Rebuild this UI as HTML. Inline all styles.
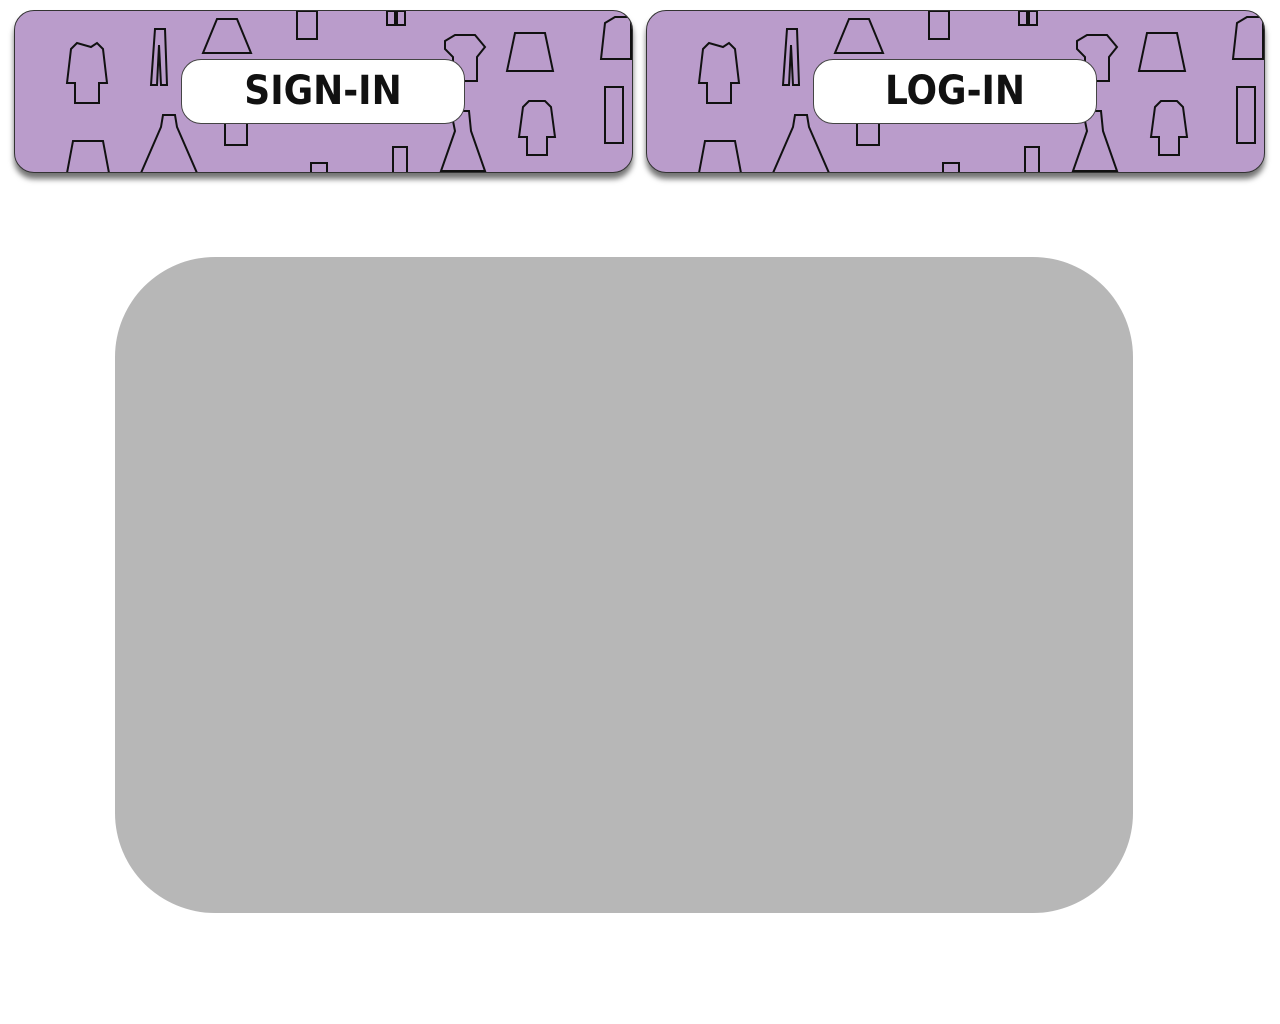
<!DOCTYPE html>
<html><head><style>
body{margin:0;width:1280px;height:1024px;background:#fff;position:relative;overflow:hidden;font-family:"DejaVu Sans Condensed","Liberation Sans",sans-serif}
.p{position:absolute;top:10px;width:617px;height:161px;background:#ba9ccb;border:1px solid #333;border-radius:20px;box-shadow:0 6px 6px rgba(0,0,0,.55);overflow:hidden}
.p svg{position:absolute;left:0;top:0}
.l{position:absolute;top:48px;width:282px;height:63px;background:#fff;border:1px solid #444;border-radius:20px;text-align:center;line-height:63px;font-size:40px;font-weight:bold;color:#111;letter-spacing:0}
.g{position:absolute;left:115px;top:257px;width:1018px;height:656px;background:#b7b7b7;border-radius:100px}
</style></head><body>
<div class="p" style="left:14px">
<svg width="617" height="161" fill="none" stroke="#111" stroke-width="2">
<g id="icons">
<path d="M62 32l-6 6-4 34h8v20h24V72h8l-4-34-6-6-6 4z"/>
<path d="M140 18h10l2 56h-6l-2-40-2 40h-6z"/>
<path d="M202 8h20l14 34h-48z"/>
<path d="M282 0h20v28h-20z"/>
<path d="M372 0h8v14h-8zM382 0h8v14h-8z"/>
<path d="M430 30l10-6h20l10 12-8 10v24h-24V46l-8-8z"/>
<path d="M500 22h30l8 38h-46z"/>
<path d="M590 12l10-6h16v42h-30z"/>
<path d="M58 130h30l6 32h-42z"/>
<path d="M148 104h12l2 12 20 46h-56l20-46z"/>
<path d="M210 100h22v34h-22z"/>
<path d="M296 152h16v10h-16z"/>
<path d="M378 136h14v26h-14z"/>
<path d="M436 100h18l2 20 14 40h-44l14-40z"/>
<path d="M514 90l-6 6-4 30h8v18h20v-18h8l-4-30-6-6z"/>
<path d="M590 76h18v56h-18z"/>
</g></svg>
<div class="l" style="left:166px">SIGN-IN</div>
</div>
<div class="p" style="left:646px">
<svg width="617" height="161" fill="none" stroke="#111" stroke-width="2"><use href="#icons"/></svg>
<div class="l" style="left:166px">LOG-IN</div>
</div>
<div class="g"></div>
</body></html>
